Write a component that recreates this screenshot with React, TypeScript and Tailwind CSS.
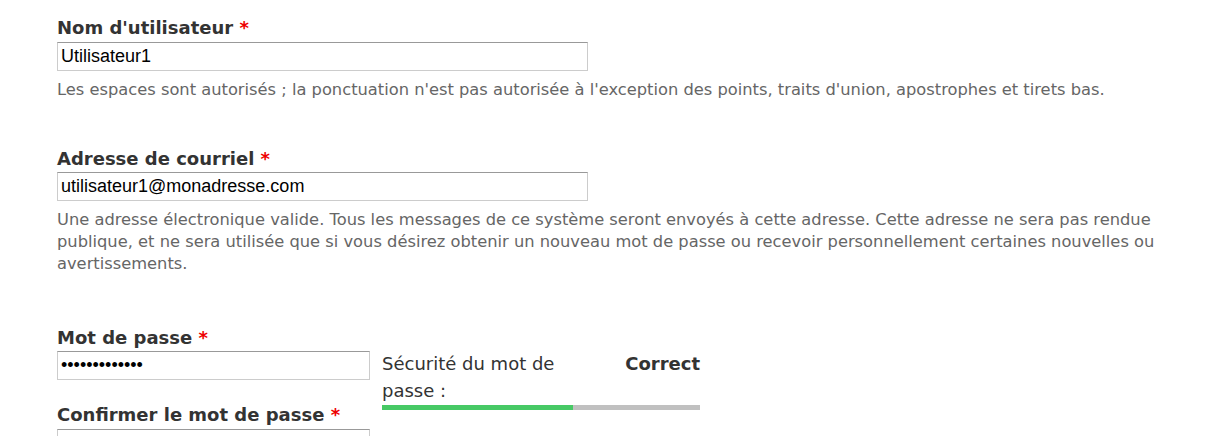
import React from 'react';

const Label: React.FC<{ text: string }> = ({ text }) => (
  <label className="block text-[18px] leading-[20px] font-bold text-[#333]">
    {text} <span className="text-[#e00]">*</span>
  </label>
);

const Input: React.FC<{ value: string; type?: string; className?: string }> = ({ value, type = 'text', className = 'w-[531px]' }) => (
  <input
    type={type}
    defaultValue={value}
    readOnly
    className={`${className} block h-[29px] border border-[#ccc] border-t-[#999] bg-white px-[3px] text-[18px] text-black outline-none font-['Liberation_Sans',Arial,sans-serif]`}
  />
);

const Description: React.FC<{ children: React.ReactNode }> = ({ children }) => (
  <p className="mt-[8px] max-w-[1110px] text-[16.3px] leading-[22px] text-[#666]">{children}</p>
);

export default function App() {
  return (
    <div className="h-[436px] overflow-hidden bg-white pl-[57px] pt-[18px] font-['DejaVu_Sans',sans-serif]">
      {/* Username */}
      <div>
        <Label text="Nom d'utilisateur" />
        <div className="mt-[4px]">
          <Input value="Utilisateur1" />
        </div>
        <Description>
          Les espaces sont autorisés ; la ponctuation n'est pas autorisée à l'exception des points, traits d'union, apostrophes et tirets bas.
        </Description>
      </div>

      {/* Email */}
      <div className="mt-[48px]">
        <Label text="Adresse de courriel" />
        <div className="mt-[3px]">
          <Input value="utilisateur1@monadresse.com" />
        </div>
        <Description>
          Une adresse électronique valide. Tous les messages de ce système seront envoyés à cette adresse. Cette adresse ne sera pas rendue publique, et ne sera utilisée que si vous désirez obtenir un nouveau mot de passe ou recevoir personnellement certaines nouvelles ou avertissements.
        </Description>
      </div>

      {/* Password */}
      <div className="mt-[53px] flex items-start gap-[12px]">
        <div>
          <Label text="Mot de passe" />
          <div className="mt-[3px]">
            <Input value="motdepasse123" type="password" className="w-[313px]" />
          </div>
          <div className="mt-[25px]">
            <Label text="Confirmer le mot de passe" />
            <div className="mt-[4px]">
              <Input value="" type="password" className="w-[313px]" />
            </div>
          </div>
        </div>
        <div className="mt-[22px] w-[318px]">
          <div className="flex items-start justify-between text-[18px] leading-[27px] text-[#333]">
            <span className="max-w-[200px]">Sécurité du mot de passe :</span>
            <span className="font-bold">Correct</span>
          </div>
          <div className="mt-[1px] h-[5px] w-full bg-[#c0c0c0]">
            <div className="h-full bg-[#47c965]" style={{ width: '60%' }} />
          </div>
          <p className="mt-[28px] text-[16.3px] leading-[22px] text-[#666]">
            Pour rendre votre mot de passe plus sûr :
          </p>
        </div>
      </div>
    </div>
  );
}
